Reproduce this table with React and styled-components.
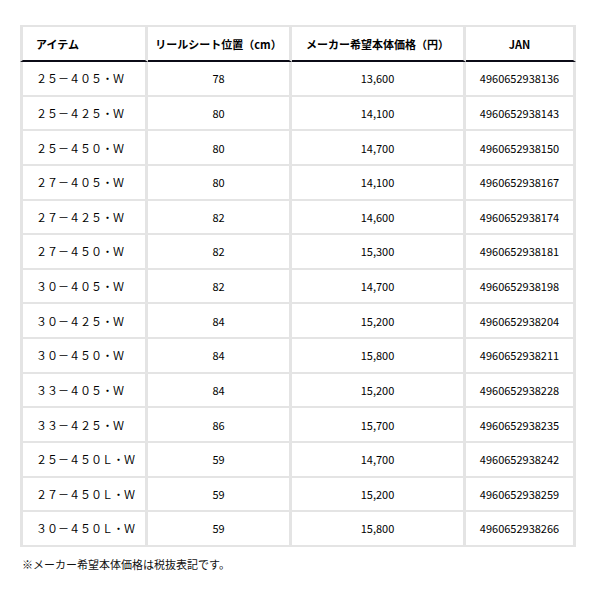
import React from 'react';
import styled, { createGlobalStyle } from 'styled-components';

const GlobalStyle = createGlobalStyle`
  * {
    box-sizing: border-box;
  }
  body {
    margin: 0;
    background: #fff;
    font-family: "Noto Sans CJK JP", "Noto Sans", sans-serif;
    color: #000;
  }
`;

const Page = styled.div`
  padding: 25px 24px 0 20px;
`;

const Table = styled.table`
  width: 556px;
  border-collapse: separate;
  border-spacing: 0;
  table-layout: fixed;
  font-size: 11px;
`;

const HeadRow = styled.tr`
  height: 37px;
`;

const Row = styled.tr`
  height: 34.64px;
`;

const HeadCell = styled.th`
  font-weight: 700;
  text-align: ${(p) => (p.$left ? 'left' : 'center')};
  padding: 0 0 0 ${(p) => (p.$left ? '13px' : '0')};
  border-top: 2px solid #e4e4e4;
  border-right: 3px solid #e4e4e4;
  border-bottom: 2px solid #0b0b16;
  border-left: ${(p) => (p.$first ? '3px solid #e4e4e4' : 'none')};
  color: #000;
`;

const Cell = styled.td`
  font-weight: 400;
  text-align: ${(p) => (p.$left ? 'left' : 'center')};
  padding: 0 0 0 ${(p) => (p.$left ? '13px' : '0')};
  border-right: 3px solid #e4e4e4;
  border-bottom: 2px solid #e4e4e4;
  border-left: ${(p) => (p.$first ? '3px solid #e4e4e4' : 'none')};
  color: #000;
  white-space: nowrap;
`;

const Note = styled.p`
  margin: 9px 0 0 2px;
  font-size: 11px;
  line-height: 16px;
  color: #111;
`;

const rows = [
  ['２５－４０５・Ｗ', '78', '13,600', '4960652938136'],
  ['２５－４２５・Ｗ', '80', '14,100', '4960652938143'],
  ['２５－４５０・Ｗ', '80', '14,700', '4960652938150'],
  ['２７－４０５・Ｗ', '80', '14,100', '4960652938167'],
  ['２７－４２５・Ｗ', '82', '14,600', '4960652938174'],
  ['２７－４５０・Ｗ', '82', '15,300', '4960652938181'],
  ['３０－４０５・Ｗ', '82', '14,700', '4960652938198'],
  ['３０－４２５・Ｗ', '84', '15,200', '4960652938204'],
  ['３０－４５０・Ｗ', '84', '15,800', '4960652938211'],
  ['３３－４０５・Ｗ', '84', '15,200', '4960652938228'],
  ['３３－４２５・Ｗ', '86', '15,700', '4960652938235'],
  ['２５－４５０Ｌ・Ｗ', '59', '14,700', '4960652938242'],
  ['２７－４５０Ｌ・Ｗ', '59', '15,200', '4960652938259'],
  ['３０－４５０Ｌ・Ｗ', '59', '15,800', '4960652938266'],
];

const App = () => {
  return (
    <Page>
      <GlobalStyle />
      <Table>
        <colgroup>
          <col style={{ width: 128 }} />
          <col style={{ width: 144 }} />
          <col style={{ width: 174 }} />
          <col style={{ width: 110 }} />
        </colgroup>
        <thead>
          <HeadRow>
            <HeadCell $left $first>アイテム</HeadCell>
            <HeadCell>リールシート位置（cm）</HeadCell>
            <HeadCell>メーカー希望本体価格（円）</HeadCell>
            <HeadCell>JAN</HeadCell>
          </HeadRow>
        </thead>
        <tbody>
          {rows.map((r) => (
            <Row key={r[3]}>
              <Cell $left $first>{r[0]}</Cell>
              <Cell>{r[1]}</Cell>
              <Cell>{r[2]}</Cell>
              <Cell>{r[3]}</Cell>
            </Row>
          ))}
        </tbody>
      </Table>
      <Note>※メーカー希望本体価格は税抜表記です。</Note>
    </Page>
  );
};

export default App;
